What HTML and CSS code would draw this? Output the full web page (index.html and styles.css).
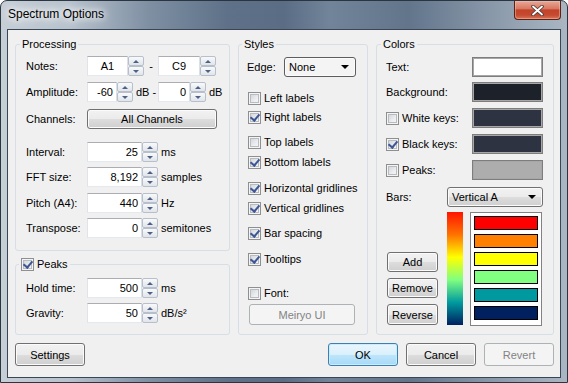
FILE: index.html
```html
<!DOCTYPE html>
<html lang="en">
<head>
    <meta charset="UTF-8">
    <title>Spectrum Options</title>
    <link rel="stylesheet" href="styles.css">
</head>
<body>

<div class="window">
    <div class="titlebar">
        <span class="title">Spectrum Options</span>
        <span class="close">
            <svg width="15" height="11" viewBox="0 0 15 11">
                <path d="M3 1.5 L12 9.5 M12 1.5 L3 9.5" stroke="#4a3c3a" stroke-width="3.6" stroke-linecap="round"/>
                <path d="M3 1.5 L12 9.5 M12 1.5 L3 9.5" stroke="#ffffff" stroke-width="1.8" stroke-linecap="round"/>
            </svg>
        </span>
    </div>

    <div class="client">
        <div class="columns">
            <!-- left column -->
            <div class="col-left">
                <fieldset class="group proc">
                    <legend>Processing</legend>
                    <div class="pad">
                        <div class="row">
                            <span class="lbl">Notes:</span>
                            <span class="num center w41">A1</span><span class="spin"><i class="up"></i><i class="dn"></i></span>
                            <span class="sep">-</span>
                            <span class="num center w42">C9</span><span class="spin"><i class="up"></i><i class="dn"></i></span>
                        </div>
                        <div class="row mt6">
                            <span class="lbl">Amplitude:</span>
                            <span class="num w30">-60</span><span class="spin"><i class="up"></i><i class="dn"></i></span>
                            <span class="unit db">dB -</span>
                            <span class="num w32">0</span><span class="spin"><i class="up"></i><i class="dn"></i></span>
                            <span class="unit">dB</span>
                        </div>
                        <div class="row mt7">
                            <span class="lbl">Channels:</span>
                            <button class="btn channels">All Channels</button>
                        </div>
                        <div class="row mt13">
                            <span class="lbl">Interval:</span>
                            <span class="num w55">25</span><span class="spin"><i class="up"></i><i class="dn"></i></span>
                            <span class="unit">ms</span>
                        </div>
                        <div class="row mt5">
                            <span class="lbl">FFT size:</span>
                            <span class="num w55">8,192</span><span class="spin"><i class="up"></i><i class="dn"></i></span>
                            <span class="unit">samples</span>
                        </div>
                        <div class="row mt6">
                            <span class="lbl">Pitch (A4):</span>
                            <span class="num w55">440</span><span class="spin"><i class="up"></i><i class="dn"></i></span>
                            <span class="unit">Hz</span>
                        </div>
                        <div class="row mt5">
                            <span class="lbl">Transpose:</span>
                            <span class="num w55">0</span><span class="spin"><i class="up"></i><i class="dn"></i></span>
                            <span class="unit">semitones</span>
                        </div>
                    </div>
                </fieldset>

                <fieldset class="group peaks">
                    <legend><span class="chk on"></span>Peaks</legend>
                    <div class="pad">
                        <div class="row">
                            <span class="lbl">Hold time:</span>
                            <span class="num w55">500</span><span class="spin"><i class="up"></i><i class="dn"></i></span>
                            <span class="unit">ms</span>
                        </div>
                        <div class="row mt5">
                            <span class="lbl">Gravity:</span>
                            <span class="num w55">50</span><span class="spin"><i class="up"></i><i class="dn"></i></span>
                            <span class="unit">dB/s²</span>
                        </div>
                    </div>
                </fieldset>
            </div>

            <!-- styles column -->
            <fieldset class="group styles">
                <legend>Styles</legend>
                <div class="pad">
                    <div class="row">
                        <span class="edge-lbl">Edge:</span>
                        <span class="combo edge">None</span>
                    </div>
                    <div class="check mt15"><span class="chk"></span>Left labels</div>
                    <div class="check mt6"><span class="chk on"></span>Right labels</div>
                    <div class="check mt12"><span class="chk"></span>Top labels</div>
                    <div class="check mt7"><span class="chk on"></span>Bottom labels</div>
                    <div class="check mt13"><span class="chk on"></span>Horizontal gridlines</div>
                    <div class="check mt7"><span class="chk on"></span>Vertical gridlines</div>
                    <div class="check mt12"><span class="chk on"></span>Bar spacing</div>
                    <div class="check mt13"><span class="chk on"></span>Tooltips</div>
                    <div class="check mt21"><span class="chk"></span>Font:</div>
                    <button class="btn disabled font-btn">Meiryo UI</button>
                </div>
            </fieldset>

            <!-- colors column -->
            <fieldset class="group colors">
                <legend>Colors</legend>
                <div class="pad">
                    <div class="crow"><span>Text:</span><span class="swatch sw-text"></span></div>
                    <div class="crow mt5"><span>Background:</span><span class="swatch sw-bg"></span></div>
                    <div class="crow mt6"><span class="check"><span class="chk"></span>White keys:</span><span class="swatch sw-keys"></span></div>
                    <div class="crow mt6"><span class="check"><span class="chk on"></span>Black keys:</span><span class="swatch sw-keys"></span></div>
                    <div class="crow mt6"><span class="check"><span class="chk"></span>Peaks:</span><span class="swatch sw-peaks"></span></div>
                    <div class="crow mt7"><span>Bars:</span><span class="combo bars">Vertical A</span></div>
                    <div class="bars-area">
                        <div class="bar-btns">
                            <button class="btn">Add</button>
                            <button class="btn">Remove</button>
                            <button class="btn">Reverse</button>
                        </div>
                        <div class="gradient"></div>
                        <div class="bar-list">
                            <div class="bar-item c1"></div>
                            <div class="bar-item c2"></div>
                            <div class="bar-item c3"></div>
                            <div class="bar-item c4"></div>
                            <div class="bar-item c5"></div>
                            <div class="bar-item c6"></div>
                        </div>
                    </div>
                </div>
            </fieldset>
        </div>

        <div class="footer">
            <button class="btn wide">Settings</button>
            <span class="spacer"></span>
            <button class="btn wide ok">OK</button>
            <button class="btn wide">Cancel</button>
            <button class="btn wide disabled">Revert</button>
        </div>
    </div>
</div>

</body>
</html>
```

FILE: styles.css
```css
* {
    box-sizing: border-box;
}

body {
    margin: 0;
    font-family: "Liberation Sans", Arial, sans-serif;
    font-size: 11px;
    color: #000;
    background: #fff;
}

/* window frame */
.window {
    width: 568px;
    height: 383px;
    display: flex;
    flex-direction: column;
    border: 1px solid #2b3540;
    border-radius: 7px 7px 0 0;
    background: linear-gradient(90deg, #c6ced6 0%, #b7c2cd 12%, #7f90a3 26%, #5e7188 40%, #5a6d84 50%, #71849a 58%, #62758b 72%, #8a99aa 87%, #aab6c2 100%);
}
.titlebar {
    height: 28px;
    display: flex;
    align-items: flex-start;
    padding-left: 7px;
}
.title {
    font-family: "Liberation Sans", Arial, sans-serif;
    font-size: 12px;
    line-height: 27px;
    color: #000;
    text-shadow: 0 0 6px #fff, 0 0 10px #fff, 0 0 14px rgba(255, 255, 255, 0.9);
}
.close {
    margin-left: auto;
    margin-right: 6px;
    width: 47px;
    height: 19px;
    display: flex;
    align-items: center;
    justify-content: center;
    border: 1px solid #5a2218;
    border-top: none;
    border-radius: 0 0 4px 4px;
    background: linear-gradient(#e9a896 0%, #d87a63 42%, #c2432a 50%, #c54a30 78%, #d8765a 100%);
    box-shadow: inset 0 0 0 1px rgba(255, 200, 180, 0.45);
}

.client {
    flex: 1;
    margin: 0 6px 4px 6px;
    border: 1px solid #394656;
    background: #f0f0f0;
    padding: 8px 6px 11px 7px;
    display: flex;
    flex-direction: column;
}
.columns {
    flex: 1;
    display: grid;
    grid-template-columns: 215px 130px 178px;
    column-gap: 8px;
}
.col-left {
    display: flex;
    flex-direction: column;
}

/* group boxes */
.group {
    margin: 0;
    padding: 0;
    min-width: 0;
    border: 1px solid #d5dfe5;
    border-radius: 3px;
}
.group legend {
    margin-left: 4px;
    padding: 0 2px;
    line-height: 13px;
}
.styles legend {
    margin-left: 3px;
}
.peaks {
    flex: 1;
    margin-top: 7px;
}
.peaks legend {
    margin-left: 3px;
}
.peaks legend .chk {
    margin-right: 3px;
    vertical-align: top;
}
.proc .pad {
    padding: 5px 0 12px 10px;
}
.peaks .pad {
    padding: 7px 0 0 10px;
}
.styles .pad {
    padding: 6px 0 0 9px;
}
.colors .pad {
    padding: 6px 10px 0 9px;
}

.mt5 { margin-top: 5px; }
.mt6 { margin-top: 6px; }
.mt7 { margin-top: 7px; }
.mt12 { margin-top: 12px; }
.mt13 { margin-top: 13px; }
.mt15 { margin-top: 15px; }
.mt21 { margin-top: 21px; }

/* rows with spin boxes */
.row {
    display: flex;
    align-items: center;
    height: 20px;
}
.lbl {
    width: 61px;
}
.num {
    height: 20px;
    line-height: 18px;
    background: #fff;
    border: 1px solid;
    border-color: #abadb3 #dbdfe6 #e3e9ef #e2e3ea;
    text-align: right;
    padding-right: 3px;
}
.num.center {
    text-align: center;
    padding: 0;
}
.w30 { width: 30px; }
.w32 { width: 32px; }
.w41 { width: 41px; }
.w42 { width: 42px; }
.w55 { width: 55px; }

.spin {
    width: 16px;
    height: 20px;
    display: flex;
    flex-direction: column;
}
.spin i {
    flex: 1;
    display: flex;
    align-items: center;
    justify-content: center;
    border: 1px solid #b6bfcb;
    border-radius: 2px;
    background: linear-gradient(#f8f9fa, #e1e5ea);
}
.spin i::before {
    content: "";
    border-left: 3px solid transparent;
    border-right: 3px solid transparent;
}
.spin .up::before {
    border-bottom: 3px solid #4d6185;
}
.spin .dn::before {
    border-top: 3px solid #4d6185;
}
.sep {
    width: 14px;
    text-align: center;
}
.unit {
    margin-left: 3px;
}
.unit.db {
    width: 22px;
    margin-left: 3px;
}

/* buttons */
.btn {
    font-family: inherit;
    font-size: 11px;
    color: #000;
    height: 20px;
    padding: 0;
    border: 1px solid #707070;
    border-radius: 3px;
    background: linear-gradient(#f2f2f2 0%, #ebebeb 50%, #dddddd 51%, #cfcfcf 100%);
    box-shadow: inset 0 0 0 1px #fbfbfb;
}
.btn.disabled {
    color: #838383;
    border-color: #adb2b5;
    background: #f4f4f4;
    box-shadow: none;
}
.btn.ok {
    border-color: #3c7fb1;
    background: linear-gradient(#eaf6fd 0%, #d9f0fc 50%, #bee6fd 51%, #a7d9f5 100%);
    box-shadow: inset 0 0 0 1px #c9ecff;
}
.channels {
    width: 130px;
}
.font-btn {
    display: block;
    width: 106px;
    height: 21px;
    margin: 4px 0 0 1px;
}

/* combo boxes */
.combo {
    height: 20px;
    display: flex;
    align-items: center;
    justify-content: space-between;
    padding: 0 6px 0 4px;
    border: 1px solid #707070;
    border-radius: 3px;
    background: linear-gradient(#f2f2f2 0%, #ebebeb 50%, #dddddd 51%, #cfcfcf 100%);
    box-shadow: inset 0 0 0 1px #fbfbfb;
}
.combo::after {
    content: "";
    border-left: 4px solid transparent;
    border-right: 4px solid transparent;
    border-top: 4px solid #000;
}
.edge-lbl {
    width: 37px;
    margin-left: -1px;
}
.combo.edge {
    width: 72px;
    background: #f4f4f4;
    border-color: #5d5d5d;
}
.combo.bars {
    width: 96px;
    height: 20px;
}

/* checkboxes */
.check {
    display: flex;
    align-items: center;
    height: 13px;
    line-height: 13px;
}
.chk {
    position: relative;
    display: inline-block;
    width: 13px;
    height: 13px;
    margin-right: 3px;
    border: 1px solid #8e8f8f;
    background: linear-gradient(135deg, #c9cdd3 0%, #eceef0 60%, #f8f8f8 100%);
    box-shadow: inset 0 0 0 1px #f4f4f4, inset 0 0 0 2px #b8bcc1;
}
.chk.on::after {
    content: "";
    position: absolute;
    left: 3px;
    top: 0px;
    width: 4px;
    height: 7px;
    border-right: 2px solid #3f5694;
    border-bottom: 2px solid #3f5694;
    transform: rotate(40deg);
}

/* color swatches */
.crow {
    display: flex;
    align-items: center;
    justify-content: space-between;
    height: 20px;
}
.swatch {
    width: 71px;
    height: 20px;
    border: 1px solid #7d7d7d;
    box-shadow: inset 0 0 0 1px #a7a7a7;
}
.sw-text { background: #fff; }
.sw-bg { background: #1d2129; }
.sw-keys { background: #2d3340; }
.sw-peaks { background: #adadad; }

.bars-area {
    display: flex;
    margin-top: 5px;
    height: 114px;
}
.bar-btns {
    width: 51px;
    margin-left: 1px;
    display: flex;
    flex-direction: column;
    justify-content: flex-end;
    gap: 6px;
    padding-bottom: 1px;
}
.bar-btns .btn {
    width: 51px;
}
.bar-btns .btn:last-child {
    height: 21px;
}
.gradient {
    width: 16px;
    height: 113px;
    margin-left: 9px;
    background: linear-gradient(#ff1400 0%, #ff7200 20%, #ffff00 40%, #80ff80 60%, #009a9f 80%, #002060 100%);
}
.bar-list {
    width: 72px;
    margin-left: 7px;
    background: #fff;
    border: 1px solid #828282;
    padding: 3px 0 0 3px;
}
.bar-item {
    width: 64px;
    height: 14px;
    border: 1px solid #000;
    margin-bottom: 4px;
}
.c1 { background: #ff0000; }
.c2 { background: #ff8000; }
.c3 { background: #ffff00; }
.c4 { background: #80ff80; }
.c5 { background: #00999f; }
.c6 { background: #002060; }

/* bottom buttons */
.footer {
    display: flex;
    gap: 8px;
    margin-top: 8px;
    height: 23px;
}
.footer .btn {
    height: 23px;
    width: 70px;
}
.spacer {
    flex: 1;
}
```
